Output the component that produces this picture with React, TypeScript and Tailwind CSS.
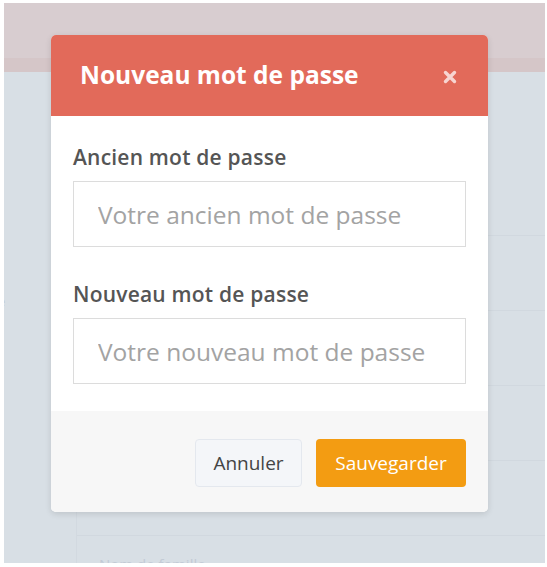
const rows = [0, 1, 2, 3, 4];

const Field = ({ label, placeholder }: { label: string; placeholder: string }) => (
    <div className="flex flex-col">
        <label className="text-[21px] font-semibold leading-[26px] tracking-[0.01em] text-[#555]">
            {label}
        </label>
        <input
            type="password"
            placeholder={placeholder}
            className="mt-[11px] h-[66px] w-full border border-[#dcdcdc] bg-white px-6 text-[24.5px] text-[#555] outline-none placeholder:text-[#a3a3a3]"
        />
    </div>
);

const App = () => {
    return (
        <div
            className="h-[567px] w-[547px] overflow-hidden bg-white pb-[4px] pl-[4px] pr-[2px] pt-[3px]"
            style={{ fontFamily: '"Open Sans", "Noto Sans", sans-serif' }}
        >
            <div className="relative flex h-full w-full flex-col overflow-hidden bg-[#d8dfe5]">
                {/* page behind the overlay */}
                <div className="h-[55px] shrink-0 bg-[#d8cdd0]" />
                <div className="h-[14px] shrink-0 bg-[#d5c6c8]" />
                <div className="flex flex-1">
                    <div className="w-[73px] shrink-0 border-r border-[#d2d9e0]">
                        <div className="mt-[220px] text-[13px] text-[#c5ccd3]">
                            <span className="-ml-[6px]">e</span>
                        </div>
                    </div>
                    <div className="flex flex-1 flex-col">
                        <div className="h-[163px] shrink-0" />
                        {rows.map((r) => (
                            <div key={r} className="h-[75px] shrink-0 border-t border-[#d1d8df]">
                                {r === 4 && (
                                    <p className="mt-[17px] pl-[22px] text-[15px] text-[#c3cbd5]">
                                        Nom de famille
                                    </p>
                                )}
                            </div>
                        ))}
                    </div>
                </div>

                {/* modal */}
                <div className="absolute left-[47px] top-[32px] w-[437px] overflow-hidden rounded-[5px] bg-white shadow-[0_2px_6px_rgba(0,0,0,0.12)]">
                    <div className="flex h-[81px] items-center justify-between bg-[#e26a5a] pl-[29px] pr-[31px]">
                        <h3 className="text-[24.5px] font-bold text-white">Nouveau mot de passe</h3>
                        <svg width="14" height="14" viewBox="0 0 14 14" className="mt-[2px]">
                            <path
                                d="M2.5 2.5 L11.5 11.5 M11.5 2.5 L2.5 11.5"
                                stroke="rgba(255,255,255,0.72)"
                                strokeWidth="3.4"
                                strokeLinecap="round"
                            />
                        </svg>
                    </div>
                    <div className="flex flex-col gap-[34px] px-[22px] pb-[27px] pt-[28px]">
                        <Field label="Ancien mot de passe" placeholder="Votre ancien mot de passe" />
                        <Field label="Nouveau mot de passe" placeholder="Votre nouveau mot de passe" />
                    </div>
                    <div className="flex h-[101px] items-start justify-end gap-[14px] bg-[#f7f7f7] pr-[22px] pt-[28px]">
                        <button className="h-[48px] w-[107px] rounded-[4px] border border-[#e4e8ee] bg-[#f4f6f9] text-[19px] text-[#444]">
                            Annuler
                        </button>
                        <button className="h-[48px] w-[150px] rounded-[4px] bg-[#f39c12] text-[19px] text-white">
                            Sauvegarder
                        </button>
                    </div>
                </div>
            </div>
        </div>
    );
};

export default App;
